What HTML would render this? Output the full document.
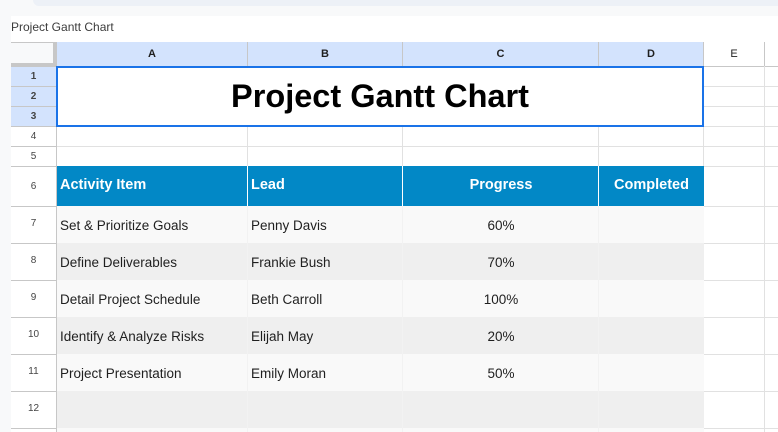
<!DOCTYPE html>
<html><head><meta charset="utf-8"><style>
*{margin:0;padding:0;box-sizing:border-box}
body{width:778px;height:432px;overflow:hidden;background:#f8f9fa;position:relative;font-family:"Liberation Sans",Arial,sans-serif}
.a{position:absolute}
.t{font-size:13.5px;color:#1f1f1f;white-space:nowrap}
.rh{position:absolute;left:11px;width:45px;text-align:center;font-size:10px;font-weight:bold;color:#444;border-bottom:1px solid #c7c7c7}
.ch{position:absolute;top:42px;height:25px;line-height:24px;text-align:center;font-size:11px;font-weight:bold;color:#1f1f1f;border-right:1px solid #c7c7c7;border-bottom:1px solid #c7c7c7;background:#d3e3fd}
.hl{position:absolute;height:1px;background:#e1e1e1}
.vl{position:absolute;width:1px;background:#e1e1e1}
.h{color:#fff;font-weight:bold;font-size:14.5px}
</style></head><body>
<div class="a" style="left:33px;top:0;width:745px;height:6px;background:#edf1f7;border-bottom-left-radius:12px"></div>
<div class="a" style="left:11px;top:16px;width:767px;height:416px;background:#fff"></div>
<div class="a t" style="left:11px;top:20px;font-size:12px;color:#3c3c3c">Project Gantt Chart</div>
<div class="a" style="left:11px;top:42px;width:46px;height:25px;background:#f8f9fa;border-right:4px solid #c7c7c7;border-bottom:4px solid #c7c7c7;border-top:1px solid #c7c7c7"></div>
<div class="a" style="left:11px;top:42px;width:767px;height:1px;background:#c7c7c7"></div>
<div class="ch" style="left:57px;width:191px">A</div>
<div class="ch" style="left:248px;width:155px">B</div>
<div class="ch" style="left:403px;width:196px">C</div>
<div class="ch" style="left:599px;width:105px">D</div>
<div class="ch" style="left:704px;width:61px;background:#fff;font-weight:normal">E</div>
<div class="ch" style="left:765px;width:20px;background:#fff"></div>
<div class="a" style="left:56px;top:66px;width:1px;height:366px;background:#c7c7c7"></div>
<div class="rh" style="top:67px;height:20px;line-height:19px;background:#d3e3fd">1</div>
<div class="rh" style="top:87px;height:20px;line-height:19px;background:#d3e3fd">2</div>
<div class="rh" style="top:107px;height:20px;line-height:19px;background:#d3e3fd">3</div>
<div class="rh" style="top:127px;height:20px;line-height:19px;font-weight:normal">4</div>
<div class="rh" style="top:147px;height:20px;line-height:19px;font-weight:normal">5</div>
<div class="rh" style="top:167px;height:40px;line-height:39px;font-weight:normal">6</div>
<div class="rh" style="top:207px;height:37px;line-height:34px;font-weight:normal">7</div>
<div class="rh" style="top:244px;height:37px;line-height:34px;font-weight:normal">8</div>
<div class="rh" style="top:281px;height:37px;line-height:34px;font-weight:normal">9</div>
<div class="rh" style="top:318px;height:37px;line-height:34px;font-weight:normal">10</div>
<div class="rh" style="top:355px;height:37px;line-height:34px;font-weight:normal">11</div>
<div class="rh" style="top:392px;height:37px;line-height:34px;font-weight:normal">12</div>
<div class="hl" style="left:57px;top:146px;width:721px"></div>
<div class="hl" style="left:57px;top:166px;width:721px"></div>
<div class="hl" style="left:704px;top:86px;width:74px"></div>
<div class="hl" style="left:704px;top:106px;width:74px"></div>
<div class="hl" style="left:704px;top:126px;width:74px"></div>
<div class="vl" style="left:247px;top:126px;height:40px"></div>
<div class="vl" style="left:402px;top:126px;height:40px"></div>
<div class="vl" style="left:598px;top:126px;height:40px"></div>
<div class="vl" style="left:703px;top:66px;height:366px"></div>
<div class="vl" style="left:764px;top:66px;height:366px"></div>
<div class="hl" style="left:704px;top:206px;width:74px"></div>
<div class="hl" style="left:704px;top:243px;width:74px"></div>
<div class="hl" style="left:704px;top:280px;width:74px"></div>
<div class="hl" style="left:704px;top:317px;width:74px"></div>
<div class="hl" style="left:704px;top:354px;width:74px"></div>
<div class="hl" style="left:704px;top:391px;width:74px"></div>
<div class="hl" style="left:704px;top:428px;width:74px"></div>
<div class="a" style="left:56px;top:66px;width:648px;height:61px;border:2px solid #1a73e8;background:#fff;text-align:center;line-height:57px;font-size:32.5px;font-weight:bold;color:#000">Project Gantt Chart</div>
<div class="a" style="left:57px;top:166px;width:647px;height:40px;background:#0288c6"></div>
<div class="a" style="left:247px;top:166px;width:1px;height:40px;background:#fff"></div>
<div class="a" style="left:402px;top:166px;width:1px;height:40px;background:#fff"></div>
<div class="a" style="left:598px;top:166px;width:1px;height:40px;background:#fff"></div>
<div class="a t h" style="left:60px;top:177px">Activity Item</div>
<div class="a t h" style="left:251px;top:177px">Lead</div>
<div class="a t h" style="left:403px;width:196px;text-align:center;top:177px">Progress</div>
<div class="a t h" style="left:599px;width:105px;text-align:center;top:177px">Completed</div>
<div class="a" style="left:57px;top:206px;width:647px;height:37px;background:#f9f9f9"></div>
<div class="a" style="left:57px;top:243px;width:647px;height:37px;background:#efefef"></div>
<div class="a" style="left:57px;top:280px;width:647px;height:37px;background:#f9f9f9"></div>
<div class="a" style="left:57px;top:317px;width:647px;height:37px;background:#efefef"></div>
<div class="a" style="left:57px;top:354px;width:647px;height:37px;background:#f9f9f9"></div>
<div class="a" style="left:57px;top:391px;width:647px;height:37px;background:#efefef"></div>
<div class="a" style="left:57px;top:428px;width:647px;height:4px;background:#f9f9f9"></div>
<div class="vl" style="left:247px;top:206px;height:226px;background:#f2f2f2"></div>
<div class="vl" style="left:402px;top:206px;height:226px;background:#f2f2f2"></div>
<div class="vl" style="left:598px;top:206px;height:226px;background:#f2f2f2"></div>
<div class="a t" style="left:60px;top:218px">Set &amp; Prioritize Goals</div>
<div class="a t" style="left:251px;top:218px">Penny Davis</div>
<div class="a t" style="left:403px;width:196px;text-align:center;top:218px">60%</div>
<div class="a t" style="left:60px;top:255px">Define Deliverables</div>
<div class="a t" style="left:251px;top:255px">Frankie Bush</div>
<div class="a t" style="left:403px;width:196px;text-align:center;top:255px">70%</div>
<div class="a t" style="left:60px;top:292px">Detail Project Schedule</div>
<div class="a t" style="left:251px;top:292px">Beth Carroll</div>
<div class="a t" style="left:403px;width:196px;text-align:center;top:292px">100%</div>
<div class="a t" style="left:60px;top:329px">Identify &amp; Analyze Risks</div>
<div class="a t" style="left:251px;top:329px">Elijah May</div>
<div class="a t" style="left:403px;width:196px;text-align:center;top:329px">20%</div>
<div class="a t" style="left:60px;top:366px">Project Presentation</div>
<div class="a t" style="left:251px;top:366px">Emily Moran</div>
<div class="a t" style="left:403px;width:196px;text-align:center;top:366px">50%</div>
</body></html>
